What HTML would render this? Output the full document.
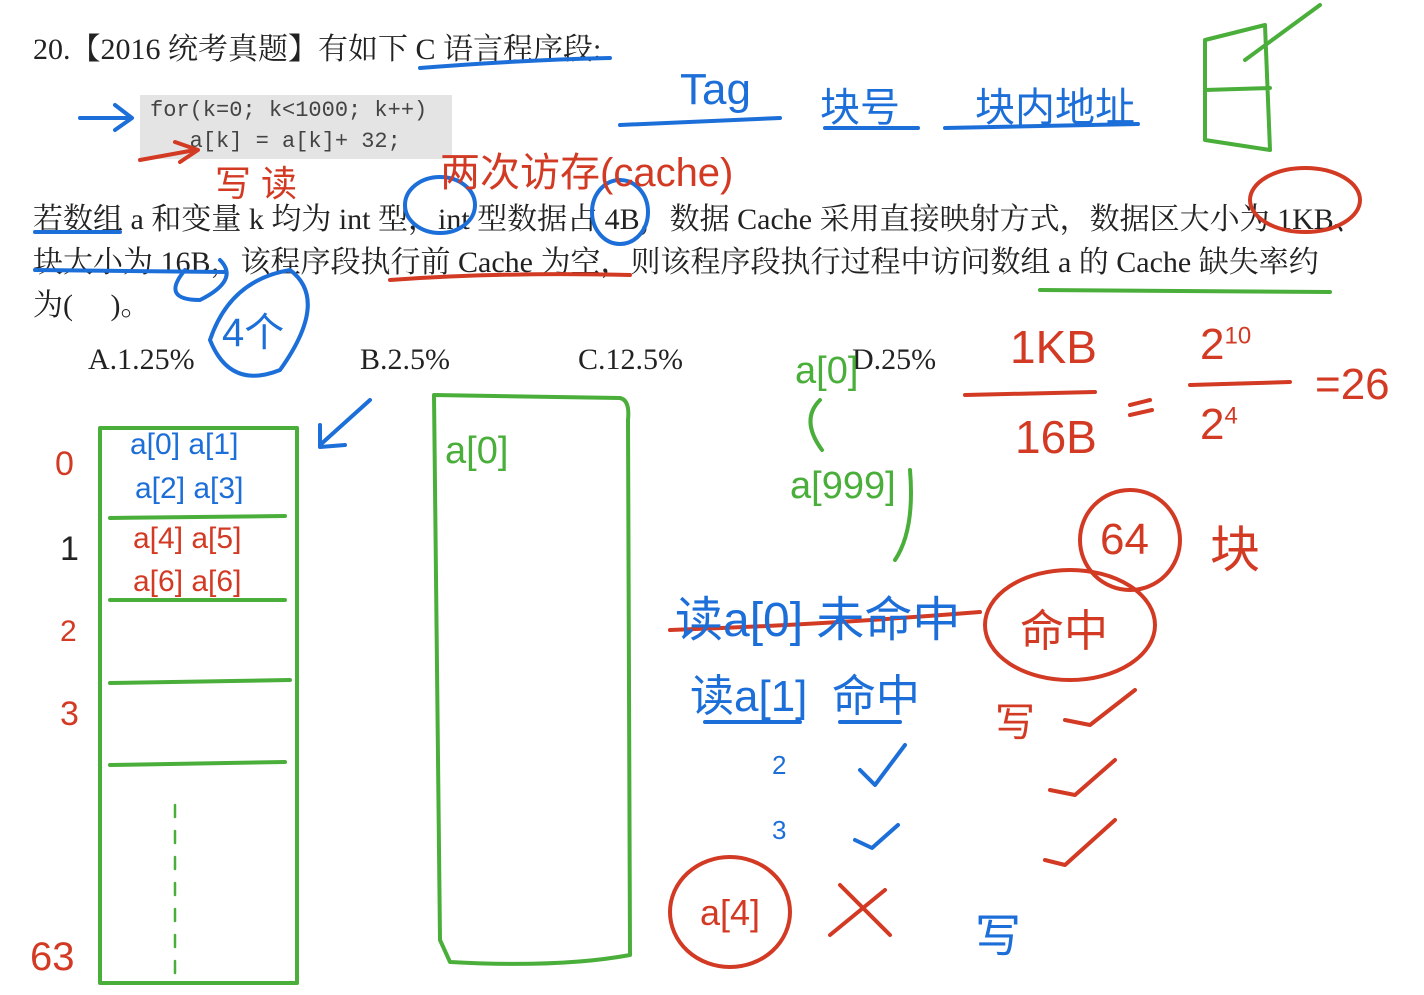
<!DOCTYPE html>
<html><head><meta charset="utf-8">
<style>
html,body{margin:0;padding:0;background:#fff;}
body{width:1424px;height:995px;position:relative;overflow:hidden;font-family:"Liberation Serif","Noto Serif CJK SC",serif;color:#222;}
.t{position:absolute;white-space:nowrap;font-size:30px;}
.code{position:absolute;left:140px;top:95px;width:312px;height:64px;background:#e4e4e4;font-family:"Liberation Mono",monospace;font-size:22px;color:#444;line-height:31px;padding-left:10px;box-sizing:border-box;}
svg{position:absolute;left:0;top:0;}
.h{font-family:"Liberation Sans","Noto Sans CJK SC",sans-serif;}
</style></head><body>
<div class="t" style="left:33px;top:24px;">20.【2016 统考真题】有如下 C 语言程序段:</div>
<div class="code">for(k=0; k&lt;1000; k++)<br>&nbsp;&nbsp;&nbsp;a[k] = a[k]+ 32;</div>
<div class="t" style="left:33px;top:194px;">若数组 a 和变量 k 均为 int 型，int 型数据占 4B，数据 Cache 采用直接映射方式，数据区大小为 1KB、</div>
<div class="t" style="left:33px;top:237px;">块大小为 16B，该程序段执行前 Cache 为空，则该程序段执行过程中访问数组 a 的 Cache 缺失率约</div>
<div class="t" style="left:33px;top:280px;">为(&nbsp;&nbsp;&nbsp;&nbsp;&nbsp;)。</div>
<div class="t" style="left:88px;top:343px;">A.1.25%</div>
<div class="t" style="left:360px;top:343px;">B.2.5%</div>
<div class="t" style="left:578px;top:343px;">C.12.5%</div>
<div class="t" style="left:852px;top:343px;">D.25%</div>

<svg width="1424" height="995" fill="none" stroke-linecap="round" stroke-linejoin="round">
<g stroke="#1c6ed8" stroke-width="4">
<path d="M420 68 Q520 60 610 58"/>
<path d="M80 118 L130 118 M115 105 L132 118 L115 130"/>
<path d="M620 125 L780 118"/>
<path d="M825 128 L918 128"/>
<path d="M945 128 L1138 124"/>
<path d="M35 232 L120 232"/>
<path d="M35 270 L225 272"/>
<ellipse cx="440" cy="205" rx="35" ry="28"/>
<ellipse cx="620" cy="212" rx="28" ry="32"/>
<path d="M185 270 Q160 300 200 300 Q240 280 220 260"/>
<path d="M210 340 Q230 280 290 270 Q330 300 280 370 Q230 390 210 340"/>
<path d="M370 400 L320 445 M320 425 L320 447 L345 445"/>
</g>
<g stroke="#d23a24" stroke-width="4">
<path d="M390 280 Q500 272 630 275"/>
<ellipse cx="1305" cy="200" rx="55" ry="32"/>
<path d="M965 395 L1095 392"/>
<path d="M1190 385 L1290 382"/>
<path d="M1130 405 L1150 400 M1130 415 L1152 410"/>
<ellipse cx="1130" cy="540" rx="50" ry="50"/>
<ellipse cx="1070" cy="625" rx="85" ry="55"/>
<path d="M670 630 Q820 625 980 612"/>
<ellipse cx="730" cy="912" rx="60" ry="55"/>
<path d="M830 935 L885 890 M840 885 L890 935"/>
<path d="M140 160 L195 150 M175 142 L198 150 L180 162"/>
</g>
<g stroke="#4aae3a" stroke-width="4">
<rect x="100" y="428" width="197" height="555"/>
<path d="M110 518 L285 516 M110 600 L285 600 M110 683 L290 680 M110 765 L285 762"/>
<path d="M434 395 L620 398 Q630 400 628 420 L630 955 Q560 968 450 962 L440 940 L434 395"/>
<path d="M1040 290 L1330 292"/>
<path d="M1205 40 L1265 25 L1270 150 L1205 140 Z M1205 90 L1270 88 M1245 60 L1320 5"/>
<path d="M910 470 Q915 530 895 560"/>
<path d="M820 400 Q800 420 822 450"/>
<path d="M175 805 L175 980" stroke-dasharray="12 14" stroke-width="2.5"/>
</g>
<g stroke="#1c6ed8" stroke-width="4">
<path d="M705 722 L800 722 M840 722 L900 722"/>
<path d="M860 770 L875 785 L905 745 M855 840 L872 848 L898 825"/>
</g>
<g stroke="#d23a24" stroke-width="4">
<path d="M1065 720 L1090 725 L1135 690 M1050 790 L1075 795 L1115 760 M1045 860 L1065 865 L1115 820"/>
</g>
</svg>

<div class="t h" style="left:680px;top:65px;font-size:44px;color:#1c6ed8;">Tag</div>
<div class="t h" style="left:820px;top:75px;font-size:40px;color:#1c6ed8;">块号</div>
<div class="t h" style="left:975px;top:75px;font-size:40px;color:#1c6ed8;">块内地址</div>
<div class="t h" style="left:440px;top:140px;font-size:40px;color:#d23a24;">两次访存(cache)</div>
<div class="t h" style="left:215px;top:155px;font-size:36px;color:#d23a24;">写 读</div>
<div class="t h" style="left:222px;top:300px;font-size:40px;color:#1c6ed8;">4个</div>
<div class="t h" style="left:130px;top:428px;font-size:30px;color:#1c6ed8;">a[0] a[1]</div>
<div class="t h" style="left:135px;top:472px;font-size:30px;color:#1c6ed8;">a[2] a[3]</div>
<div class="t h" style="left:133px;top:522px;font-size:30px;color:#d23a24;">a[4] a[5]</div>
<div class="t h" style="left:133px;top:565px;font-size:30px;color:#d23a24;">a[6] a[6]</div>
<div class="t h" style="left:55px;top:445px;font-size:34px;color:#d23a24;">0</div>
<div class="t h" style="left:60px;top:530px;font-size:34px;color:#222;">1</div>
<div class="t h" style="left:60px;top:615px;font-size:30px;color:#d23a24;">2</div>
<div class="t h" style="left:60px;top:695px;font-size:34px;color:#d23a24;">3</div>
<div class="t h" style="left:30px;top:935px;font-size:40px;color:#d23a24;">63</div>
<div class="t h" style="left:445px;top:430px;font-size:38px;color:#4aae3a;">a[0]</div>
<div class="t h" style="left:795px;top:350px;font-size:38px;color:#4aae3a;">a[0]</div>
<div class="t h" style="left:790px;top:465px;font-size:38px;color:#4aae3a;">a[999]</div>
<div class="t h" style="left:1010px;top:320px;font-size:46px;color:#d23a24;">1KB</div>
<div class="t h" style="left:1015px;top:410px;font-size:46px;color:#d23a24;">16B</div>
<div class="t h" style="left:1200px;top:320px;font-size:44px;color:#d23a24;">2<sup style="font-size:24px">10</sup></div>
<div class="t h" style="left:1200px;top:400px;font-size:44px;color:#d23a24;">2<sup style="font-size:24px">4</sup></div>
<div class="t h" style="left:1315px;top:360px;font-size:44px;color:#d23a24;">=26</div>
<div class="t h" style="left:1100px;top:515px;font-size:44px;color:#d23a24;">64</div>
<div class="t h" style="left:1210px;top:510px;font-size:50px;color:#d23a24;">块</div>
<div class="t h" style="left:675px;top:580px;font-size:48px;color:#1c6ed8;">读a[0] 未命中</div>
<div class="t h" style="left:1020px;top:595px;font-size:44px;color:#d23a24;">命中</div>
<div class="t h" style="left:690px;top:660px;font-size:44px;color:#1c6ed8;">读a[1]&nbsp; 命中</div>
<div class="t h" style="left:995px;top:690px;font-size:40px;color:#d23a24;">写</div>
<div class="t h" style="left:772px;top:750px;font-size:26px;color:#1c6ed8;">2</div>
<div class="t h" style="left:772px;top:815px;font-size:26px;color:#1c6ed8;">3</div>
<div class="t h" style="left:700px;top:892px;font-size:36px;color:#d23a24;">a[4]</div>
<div class="t h" style="left:975px;top:900px;font-size:46px;color:#1c6ed8;">写</div>
</body></html>
